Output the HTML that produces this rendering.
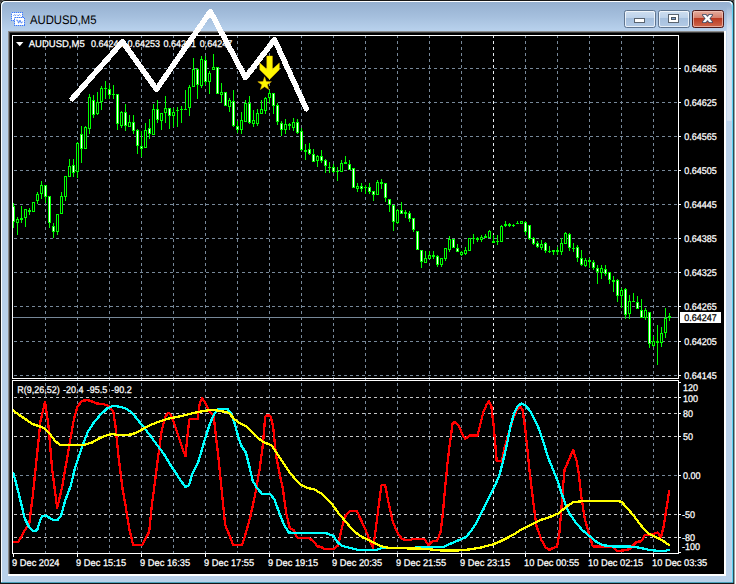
<!DOCTYPE html>
<html lang="en"><head><meta charset="utf-8"><title>AUDUSD,M5</title>
<style>
html,body{margin:0;padding:0;background:#fff;}
body{width:736px;height:584px;overflow:hidden;}
svg{display:block;}
text{font-family:"Liberation Sans",Arial,sans-serif;}
.ax{font-size:9.7px;text-rendering:geometricPrecision;fill:#fff;stroke:#fff;stroke-width:0.25px;}
.g{stroke:#778899;stroke-width:1;stroke-dasharray:3 3;fill:none;}
.gb{stroke:#e8ecf0;stroke-width:1;stroke-dasharray:3 3;fill:none;}
.gs{stroke:#c6c6c6;stroke-width:1;stroke-dasharray:3 3;fill:none;}
.w{fill:#fff;}
.ln{fill:none;stroke-width:2.3;stroke-linejoin:round;stroke-linecap:round;shape-rendering:crispEdges;}
</style></head><body>
<svg width="736" height="584" viewBox="0 0 736 584">
<defs>
<linearGradient id="tb" x1="0" y1="0" x2="0" y2="1"><stop offset="0" stop-color="#95b0d0"/><stop offset="0.5" stop-color="#a5bfdd"/><stop offset="1" stop-color="#b9d2ed"/></linearGradient>
<linearGradient id="bt" x1="0" y1="0" x2="0" y2="1"><stop offset="0" stop-color="#cfdff0"/><stop offset="0.43" stop-color="#bdd2ea"/><stop offset="0.47" stop-color="#a6c0de"/><stop offset="1" stop-color="#b4cbe6"/></linearGradient>
<linearGradient id="cl" x1="0" y1="0" x2="0" y2="1"><stop offset="0" stop-color="#e6b0a2"/><stop offset="0.43" stop-color="#d6816e"/><stop offset="0.47" stop-color="#bb3b22"/><stop offset="1" stop-color="#cf6a4f"/></linearGradient>
<linearGradient id="rf" x1="0" y1="0" x2="0" y2="1"><stop offset="0" stop-color="#d5e2f1" stop-opacity="0"/><stop offset="0.22" stop-color="#d5e2f1" stop-opacity="1"/><stop offset="1" stop-color="#d5e2f1" stop-opacity="1"/></linearGradient>
</defs>
<g shape-rendering="crispEdges">
<rect x="0" y="0" width="736" height="584" fill="#ffffff"/>
</g>
<path d="M0 584 V5 Q0 0 5 0 H729.4 Q734.4 0 734.4 5 V584 Z" fill="#161616"/>
<path d="M0 0 H5 Q0 0 0 5 Z" fill="#3a3a3a"/>
<path d="M734.4 0 H729.4 Q734.4 0 734.4 5 Z" fill="#3a3a3a"/>
<path d="M1 582.7 V6 Q1 1 6 1 H728.3 Q733.3 1 733.3 6 V582.7 Z" fill="#5fd2f4"/>
<path d="M1 582 V6 Q1 1 6 1 H728 Q731 1 732.4 3 L731.9 8 V582 Z" fill="#fdfeff"/>
<path d="M2 581.9 V7 Q2 2 7 2 H727 Q731.9 2 731.9 7 V581.9 Z" fill="#b9d1ea"/>
<path d="M2 31 V7 Q2 2 7 2 H727 Q731.9 2 731.9 7 V31 Z" fill="url(#tb)"/>
<rect x="726.8" y="6" width="4.8" height="114.8" fill="url(#rf)"/>
<g shape-rendering="crispEdges">
<rect x="8" y="31" width="718" height="545" fill="#ffffff"/>
<rect x="8" y="31" width="716" height="543" fill="#8a8a8a"/>
<rect x="9" y="32" width="715" height="542" fill="#3c3c3c"/>
<rect x="10" y="33" width="714" height="541" fill="#000000"/>
</g>
<g shape-rendering="crispEdges">
<path class="g" d="M45.5 35V553" />
<path class="g" d="M77.5 35V553" />
<path class="g" d="M109.5 35V553" />
<path class="g" d="M141.5 35V553" />
<path class="g" d="M173.5 35V553" />
<path class="g" d="M205.5 35V553" />
<path class="g" d="M237.5 35V553" />
<path class="g" d="M269.5 35V553" />
<path class="g" d="M301.5 35V553" />
<path class="g" d="M333.5 35V553" />
<path class="g" d="M365.5 35V553" />
<path class="g" d="M397.5 35V553" />
<path class="g" d="M429.5 35V553" />
<path class="g" d="M461.5 35V553" />
<path class="gb" d="M493.5 35V553" />
<path class="g" d="M525.5 35V553" />
<path class="g" d="M557.5 35V553" />
<path class="g" d="M589.5 35V553" />
<path class="g" d="M621.5 35V553" />
<path class="g" d="M653.5 35V553" />
<path class="g" d="M14 68.5H678" /><path class="g" d="M14 102.5H678" /><path class="g" d="M14 136.5H678" /><path class="g" d="M14 170.5H678" /><path class="g" d="M14 204.5H678" /><path class="g" d="M14 238.5H678" /><path class="g" d="M14 272.5H678" /><path class="g" d="M14 306.5H678" /><path class="g" d="M14 341.5H678" /><path class="g" d="M14 375.5H678" /><path class="gs" d="M14 397.5H678" /><path class="gs" d="M14 413.5H678" /><path class="gs" d="M14 436.5H678" /><path class="g" d="M14 475.5H678" /><path class="gs" d="M14 514.5H678" /><path class="gs" d="M14 537.5H678" />
<rect x="13" y="317" width="665" height="1" fill="#778899"/>
</g>
<g shape-rendering="crispEdges">
<rect x="13" y="203" width="1" height="25" fill="#00ff00"/><rect x="12" y="206" width="3" height="16" fill="#00ff00"/><rect x="13" y="207" width="1" height="14" fill="#ffffff"/>
<rect x="17" y="217" width="1" height="18" fill="#00ff00"/><rect x="16" y="219" width="3" height="4" fill="#00ff00"/><rect x="17" y="220" width="1" height="2" fill="#000000"/>
<rect x="21" y="206" width="1" height="17" fill="#00ff00"/><rect x="20" y="218" width="3" height="2" fill="#00ff00"/>
<rect x="25" y="209" width="1" height="18" fill="#00ff00"/><rect x="24" y="209" width="3" height="9" fill="#00ff00"/><rect x="25" y="210" width="1" height="7" fill="#000000"/>
<rect x="29" y="208" width="1" height="7" fill="#00ff00"/><rect x="28" y="210" width="3" height="2" fill="#00ff00"/>
<rect x="33" y="202" width="1" height="10" fill="#00ff00"/><rect x="32" y="202" width="3" height="10" fill="#00ff00"/><rect x="33" y="203" width="1" height="8" fill="#000000"/>
<rect x="37" y="192" width="1" height="12" fill="#00ff00"/><rect x="36" y="194" width="3" height="7" fill="#00ff00"/><rect x="37" y="195" width="1" height="5" fill="#000000"/>
<rect x="41" y="181" width="1" height="18" fill="#00ff00"/><rect x="40" y="185" width="3" height="9" fill="#00ff00"/><rect x="41" y="186" width="1" height="7" fill="#000000"/>
<rect x="45" y="185" width="1" height="18" fill="#00ff00"/><rect x="44" y="185" width="3" height="12" fill="#00ff00"/><rect x="45" y="186" width="1" height="10" fill="#ffffff"/>
<rect x="49" y="196" width="1" height="32" fill="#00ff00"/><rect x="48" y="196" width="3" height="27" fill="#00ff00"/><rect x="49" y="197" width="1" height="25" fill="#ffffff"/>
<rect x="53" y="223" width="1" height="15" fill="#00ff00"/><rect x="52" y="226" width="3" height="6" fill="#00ff00"/><rect x="53" y="227" width="1" height="4" fill="#ffffff"/>
<rect x="57" y="214" width="1" height="21" fill="#00ff00"/><rect x="56" y="214" width="3" height="18" fill="#00ff00"/><rect x="57" y="215" width="1" height="16" fill="#000000"/>
<rect x="61" y="192" width="1" height="22" fill="#00ff00"/><rect x="60" y="196" width="3" height="18" fill="#00ff00"/><rect x="61" y="197" width="1" height="16" fill="#000000"/>
<rect x="65" y="176" width="1" height="25" fill="#00ff00"/><rect x="64" y="176" width="3" height="21" fill="#00ff00"/><rect x="65" y="177" width="1" height="19" fill="#000000"/>
<rect x="69" y="159" width="1" height="18" fill="#00ff00"/><rect x="68" y="166" width="3" height="11" fill="#00ff00"/><rect x="69" y="167" width="1" height="9" fill="#000000"/>
<rect x="73" y="159" width="1" height="18" fill="#00ff00"/><rect x="72" y="165" width="3" height="8" fill="#00ff00"/><rect x="73" y="166" width="1" height="6" fill="#ffffff"/>
<rect x="77" y="142" width="1" height="36" fill="#00ff00"/><rect x="76" y="143" width="3" height="29" fill="#00ff00"/><rect x="77" y="144" width="1" height="27" fill="#000000"/>
<rect x="81" y="126" width="1" height="37" fill="#00ff00"/><rect x="80" y="134" width="3" height="15" fill="#00ff00"/><rect x="81" y="135" width="1" height="13" fill="#ffffff"/>
<rect x="85" y="126" width="1" height="23" fill="#00ff00"/><rect x="84" y="127" width="3" height="22" fill="#00ff00"/><rect x="85" y="128" width="1" height="20" fill="#000000"/>
<rect x="89" y="94" width="1" height="40" fill="#00ff00"/><rect x="88" y="97" width="3" height="32" fill="#00ff00"/><rect x="89" y="98" width="1" height="30" fill="#000000"/>
<rect x="93" y="95" width="1" height="23" fill="#00ff00"/><rect x="92" y="100" width="3" height="15" fill="#00ff00"/><rect x="93" y="101" width="1" height="13" fill="#ffffff"/>
<rect x="97" y="92" width="1" height="23" fill="#00ff00"/><rect x="96" y="102" width="3" height="12" fill="#00ff00"/><rect x="97" y="103" width="1" height="10" fill="#000000"/>
<rect x="101" y="86" width="1" height="24" fill="#00ff00"/><rect x="100" y="88" width="3" height="14" fill="#00ff00"/><rect x="101" y="89" width="1" height="12" fill="#000000"/>
<rect x="105" y="81" width="1" height="18" fill="#00ff00"/><rect x="104" y="88" width="3" height="1" fill="#00ff00"/>
<rect x="109" y="85" width="1" height="14" fill="#00ff00"/><rect x="108" y="89" width="3" height="6" fill="#00ff00"/><rect x="109" y="90" width="1" height="4" fill="#ffffff"/>
<rect x="113" y="85" width="1" height="14" fill="#00ff00"/><rect x="112" y="94" width="3" height="1" fill="#00ff00"/>
<rect x="117" y="94" width="1" height="36" fill="#00ff00"/><rect x="116" y="94" width="3" height="30" fill="#00ff00"/><rect x="117" y="95" width="1" height="28" fill="#ffffff"/>
<rect x="121" y="111" width="1" height="17" fill="#00ff00"/><rect x="120" y="112" width="3" height="14" fill="#00ff00"/><rect x="121" y="113" width="1" height="12" fill="#000000"/>
<rect x="125" y="104" width="1" height="27" fill="#00ff00"/><rect x="124" y="112" width="3" height="14" fill="#00ff00"/><rect x="125" y="113" width="1" height="12" fill="#ffffff"/>
<rect x="129" y="115" width="1" height="12" fill="#00ff00"/><rect x="128" y="122" width="3" height="5" fill="#00ff00"/><rect x="129" y="123" width="1" height="3" fill="#000000"/>
<rect x="133" y="115" width="1" height="19" fill="#00ff00"/><rect x="132" y="122" width="3" height="9" fill="#00ff00"/><rect x="133" y="123" width="1" height="7" fill="#ffffff"/>
<rect x="137" y="129" width="1" height="25" fill="#00ff00"/><rect x="136" y="130" width="3" height="16" fill="#00ff00"/><rect x="137" y="131" width="1" height="14" fill="#ffffff"/>
<rect x="141" y="131" width="1" height="26" fill="#00ff00"/><rect x="140" y="146" width="3" height="3" fill="#00ff00"/><rect x="141" y="147" width="1" height="1" fill="#ffffff"/>
<rect x="145" y="123" width="1" height="25" fill="#00ff00"/><rect x="144" y="130" width="3" height="18" fill="#00ff00"/><rect x="145" y="131" width="1" height="16" fill="#000000"/>
<rect x="149" y="119" width="1" height="20" fill="#00ff00"/><rect x="148" y="128" width="3" height="6" fill="#00ff00"/><rect x="149" y="129" width="1" height="4" fill="#ffffff"/>
<rect x="153" y="104" width="1" height="31" fill="#00ff00"/><rect x="152" y="109" width="3" height="26" fill="#00ff00"/><rect x="153" y="110" width="1" height="24" fill="#000000"/>
<rect x="157" y="100" width="1" height="23" fill="#00ff00"/><rect x="156" y="109" width="3" height="11" fill="#00ff00"/><rect x="157" y="110" width="1" height="9" fill="#ffffff"/>
<rect x="161" y="113" width="1" height="17" fill="#00ff00"/><rect x="160" y="113" width="3" height="8" fill="#00ff00"/><rect x="161" y="114" width="1" height="6" fill="#000000"/>
<rect x="165" y="96" width="1" height="27" fill="#00ff00"/><rect x="164" y="108" width="3" height="5" fill="#00ff00"/><rect x="165" y="109" width="1" height="3" fill="#000000"/>
<rect x="169" y="108" width="1" height="21" fill="#00ff00"/><rect x="168" y="108" width="3" height="8" fill="#00ff00"/><rect x="169" y="109" width="1" height="6" fill="#ffffff"/>
<rect x="173" y="108" width="1" height="19" fill="#00ff00"/><rect x="172" y="112" width="3" height="4" fill="#00ff00"/><rect x="173" y="113" width="1" height="2" fill="#000000"/>
<rect x="177" y="107" width="1" height="20" fill="#00ff00"/><rect x="176" y="110" width="3" height="1" fill="#00ff00"/>
<rect x="181" y="106" width="1" height="17" fill="#00ff00"/><rect x="180" y="109" width="3" height="1" fill="#00ff00"/>
<rect x="185" y="90" width="1" height="20" fill="#00ff00"/><rect x="184" y="109" width="3" height="1" fill="#00ff00"/>
<rect x="189" y="85" width="1" height="31" fill="#00ff00"/><rect x="188" y="87" width="3" height="21" fill="#00ff00"/><rect x="189" y="88" width="1" height="19" fill="#000000"/>
<rect x="193" y="58" width="1" height="29" fill="#00ff00"/><rect x="192" y="69" width="3" height="18" fill="#00ff00"/><rect x="193" y="70" width="1" height="16" fill="#000000"/>
<rect x="197" y="68" width="1" height="31" fill="#00ff00"/><rect x="196" y="69" width="3" height="16" fill="#00ff00"/><rect x="197" y="70" width="1" height="14" fill="#ffffff"/>
<rect x="201" y="56" width="1" height="32" fill="#00ff00"/><rect x="200" y="59" width="3" height="27" fill="#00ff00"/><rect x="201" y="60" width="1" height="25" fill="#000000"/>
<rect x="205" y="56" width="1" height="29" fill="#00ff00"/><rect x="204" y="60" width="3" height="22" fill="#00ff00"/><rect x="205" y="61" width="1" height="20" fill="#ffffff"/>
<rect x="209" y="71" width="1" height="23" fill="#00ff00"/><rect x="208" y="73" width="3" height="9" fill="#00ff00"/><rect x="209" y="74" width="1" height="7" fill="#000000"/>
<rect x="213" y="54" width="1" height="16" fill="#00ff00"/><rect x="212" y="67" width="3" height="3" fill="#00ff00"/><rect x="213" y="68" width="1" height="1" fill="#000000"/>
<rect x="217" y="67" width="1" height="27" fill="#00ff00"/><rect x="216" y="67" width="3" height="27" fill="#00ff00"/><rect x="217" y="68" width="1" height="25" fill="#ffffff"/>
<rect x="221" y="83" width="1" height="20" fill="#00ff00"/><rect x="220" y="92" width="3" height="3" fill="#00ff00"/><rect x="221" y="93" width="1" height="1" fill="#000000"/>
<rect x="225" y="92" width="1" height="14" fill="#00ff00"/><rect x="224" y="92" width="3" height="14" fill="#00ff00"/><rect x="225" y="93" width="1" height="12" fill="#ffffff"/>
<rect x="229" y="98" width="1" height="14" fill="#00ff00"/><rect x="228" y="100" width="3" height="7" fill="#00ff00"/><rect x="229" y="101" width="1" height="5" fill="#000000"/>
<rect x="233" y="90" width="1" height="37" fill="#00ff00"/><rect x="232" y="101" width="3" height="25" fill="#00ff00"/><rect x="233" y="102" width="1" height="23" fill="#ffffff"/>
<rect x="237" y="121" width="1" height="12" fill="#00ff00"/><rect x="236" y="126" width="3" height="4" fill="#00ff00"/><rect x="237" y="127" width="1" height="2" fill="#ffffff"/>
<rect x="241" y="112" width="1" height="22" fill="#00ff00"/><rect x="240" y="120" width="3" height="10" fill="#00ff00"/><rect x="241" y="121" width="1" height="8" fill="#000000"/>
<rect x="245" y="100" width="1" height="22" fill="#00ff00"/><rect x="244" y="103" width="3" height="19" fill="#00ff00"/><rect x="245" y="104" width="1" height="17" fill="#000000"/>
<rect x="249" y="96" width="1" height="28" fill="#00ff00"/><rect x="248" y="103" width="3" height="20" fill="#00ff00"/><rect x="249" y="104" width="1" height="18" fill="#ffffff"/>
<rect x="253" y="110" width="1" height="17" fill="#00ff00"/><rect x="252" y="120" width="3" height="4" fill="#00ff00"/><rect x="253" y="121" width="1" height="2" fill="#000000"/>
<rect x="257" y="109" width="1" height="17" fill="#00ff00"/><rect x="256" y="113" width="3" height="11" fill="#00ff00"/><rect x="257" y="114" width="1" height="9" fill="#000000"/>
<rect x="261" y="100" width="1" height="14" fill="#00ff00"/><rect x="260" y="109" width="3" height="5" fill="#00ff00"/><rect x="261" y="110" width="1" height="3" fill="#000000"/>
<rect x="265" y="97" width="1" height="17" fill="#00ff00"/><rect x="264" y="98" width="3" height="13" fill="#00ff00"/><rect x="265" y="99" width="1" height="11" fill="#000000"/>
<rect x="269" y="90" width="1" height="13" fill="#00ff00"/><rect x="268" y="93" width="3" height="5" fill="#00ff00"/><rect x="269" y="94" width="1" height="3" fill="#000000"/>
<rect x="273" y="93" width="1" height="21" fill="#00ff00"/><rect x="272" y="93" width="3" height="13" fill="#00ff00"/><rect x="273" y="94" width="1" height="11" fill="#ffffff"/>
<rect x="277" y="103" width="1" height="22" fill="#00ff00"/><rect x="276" y="105" width="3" height="17" fill="#00ff00"/><rect x="277" y="106" width="1" height="15" fill="#ffffff"/>
<rect x="281" y="121" width="1" height="15" fill="#00ff00"/><rect x="280" y="123" width="3" height="7" fill="#00ff00"/><rect x="281" y="124" width="1" height="5" fill="#ffffff"/>
<rect x="285" y="119" width="1" height="15" fill="#00ff00"/><rect x="284" y="124" width="3" height="6" fill="#00ff00"/><rect x="285" y="125" width="1" height="4" fill="#000000"/>
<rect x="289" y="123" width="1" height="7" fill="#00ff00"/><rect x="288" y="124" width="3" height="2" fill="#00ff00"/>
<rect x="293" y="118" width="1" height="13" fill="#00ff00"/><rect x="292" y="122" width="3" height="6" fill="#00ff00"/><rect x="293" y="123" width="1" height="4" fill="#000000"/>
<rect x="297" y="119" width="1" height="15" fill="#00ff00"/><rect x="296" y="122" width="3" height="11" fill="#00ff00"/><rect x="297" y="123" width="1" height="9" fill="#ffffff"/>
<rect x="301" y="128" width="1" height="23" fill="#00ff00"/><rect x="300" y="131" width="3" height="19" fill="#00ff00"/><rect x="301" y="132" width="1" height="17" fill="#ffffff"/>
<rect x="305" y="144" width="1" height="16" fill="#00ff00"/><rect x="304" y="150" width="3" height="2" fill="#00ff00"/>
<rect x="309" y="143" width="1" height="12" fill="#00ff00"/><rect x="308" y="149" width="3" height="5" fill="#00ff00"/><rect x="309" y="150" width="1" height="3" fill="#ffffff"/>
<rect x="313" y="149" width="1" height="13" fill="#00ff00"/><rect x="312" y="154" width="3" height="8" fill="#00ff00"/><rect x="313" y="155" width="1" height="6" fill="#ffffff"/>
<rect x="317" y="155" width="1" height="12" fill="#00ff00"/><rect x="316" y="156" width="3" height="5" fill="#00ff00"/><rect x="317" y="157" width="1" height="3" fill="#000000"/>
<rect x="321" y="150" width="1" height="13" fill="#00ff00"/><rect x="320" y="156" width="3" height="5" fill="#00ff00"/><rect x="321" y="157" width="1" height="3" fill="#ffffff"/>
<rect x="325" y="159" width="1" height="14" fill="#00ff00"/><rect x="324" y="160" width="3" height="6" fill="#00ff00"/><rect x="325" y="161" width="1" height="4" fill="#ffffff"/>
<rect x="329" y="162" width="1" height="11" fill="#00ff00"/><rect x="328" y="167" width="3" height="1" fill="#00ff00"/>
<rect x="333" y="164" width="1" height="9" fill="#00ff00"/><rect x="332" y="167" width="3" height="5" fill="#00ff00"/><rect x="333" y="168" width="1" height="3" fill="#ffffff"/>
<rect x="337" y="167" width="1" height="14" fill="#00ff00"/><rect x="336" y="171" width="3" height="1" fill="#00ff00"/>
<rect x="341" y="160" width="1" height="12" fill="#00ff00"/><rect x="340" y="163" width="3" height="9" fill="#00ff00"/><rect x="341" y="164" width="1" height="7" fill="#000000"/>
<rect x="345" y="156" width="1" height="8" fill="#00ff00"/><rect x="344" y="162" width="3" height="2" fill="#00ff00"/>
<rect x="349" y="160" width="1" height="10" fill="#00ff00"/><rect x="348" y="164" width="3" height="6" fill="#00ff00"/><rect x="349" y="165" width="1" height="4" fill="#ffffff"/>
<rect x="353" y="168" width="1" height="20" fill="#00ff00"/><rect x="352" y="168" width="3" height="20" fill="#00ff00"/><rect x="353" y="169" width="1" height="18" fill="#ffffff"/>
<rect x="357" y="183" width="1" height="9" fill="#00ff00"/><rect x="356" y="186" width="3" height="3" fill="#00ff00"/><rect x="357" y="187" width="1" height="1" fill="#000000"/>
<rect x="361" y="183" width="1" height="9" fill="#00ff00"/><rect x="360" y="186" width="3" height="3" fill="#00ff00"/><rect x="361" y="187" width="1" height="1" fill="#ffffff"/>
<rect x="365" y="185" width="1" height="9" fill="#00ff00"/><rect x="364" y="187" width="3" height="1" fill="#00ff00"/>
<rect x="369" y="183" width="1" height="11" fill="#00ff00"/><rect x="368" y="187" width="3" height="5" fill="#00ff00"/><rect x="369" y="188" width="1" height="3" fill="#ffffff"/>
<rect x="373" y="191" width="1" height="10" fill="#00ff00"/><rect x="372" y="191" width="3" height="4" fill="#00ff00"/><rect x="373" y="192" width="1" height="2" fill="#ffffff"/>
<rect x="377" y="180" width="1" height="15" fill="#00ff00"/><rect x="376" y="182" width="3" height="13" fill="#00ff00"/><rect x="377" y="183" width="1" height="11" fill="#000000"/>
<rect x="381" y="179" width="1" height="10" fill="#00ff00"/><rect x="380" y="182" width="3" height="2" fill="#00ff00"/>
<rect x="385" y="183" width="1" height="19" fill="#00ff00"/><rect x="384" y="183" width="3" height="15" fill="#00ff00"/><rect x="385" y="184" width="1" height="13" fill="#ffffff"/>
<rect x="389" y="199" width="1" height="13" fill="#00ff00"/><rect x="388" y="199" width="3" height="6" fill="#00ff00"/><rect x="389" y="200" width="1" height="4" fill="#ffffff"/>
<rect x="393" y="205" width="1" height="26" fill="#00ff00"/><rect x="392" y="205" width="3" height="17" fill="#00ff00"/><rect x="393" y="206" width="1" height="15" fill="#ffffff"/>
<rect x="397" y="209" width="1" height="15" fill="#00ff00"/><rect x="396" y="210" width="3" height="13" fill="#00ff00"/><rect x="397" y="211" width="1" height="11" fill="#000000"/>
<rect x="401" y="202" width="1" height="12" fill="#00ff00"/><rect x="400" y="210" width="3" height="4" fill="#00ff00"/><rect x="401" y="211" width="1" height="2" fill="#ffffff"/>
<rect x="405" y="210" width="1" height="8" fill="#00ff00"/><rect x="404" y="212" width="3" height="2" fill="#00ff00"/>
<rect x="409" y="211" width="1" height="11" fill="#00ff00"/><rect x="408" y="213" width="3" height="6" fill="#00ff00"/><rect x="409" y="214" width="1" height="4" fill="#ffffff"/>
<rect x="413" y="218" width="1" height="14" fill="#00ff00"/><rect x="412" y="218" width="3" height="12" fill="#00ff00"/><rect x="413" y="219" width="1" height="10" fill="#ffffff"/>
<rect x="417" y="231" width="1" height="19" fill="#00ff00"/><rect x="416" y="231" width="3" height="19" fill="#00ff00"/><rect x="417" y="232" width="1" height="17" fill="#ffffff"/>
<rect x="421" y="250" width="1" height="18" fill="#00ff00"/><rect x="420" y="250" width="3" height="12" fill="#00ff00"/><rect x="421" y="251" width="1" height="10" fill="#ffffff"/>
<rect x="425" y="251" width="1" height="12" fill="#00ff00"/><rect x="424" y="258" width="3" height="5" fill="#00ff00"/><rect x="425" y="259" width="1" height="3" fill="#000000"/>
<rect x="429" y="251" width="1" height="8" fill="#00ff00"/><rect x="428" y="255" width="3" height="4" fill="#00ff00"/><rect x="429" y="256" width="1" height="2" fill="#000000"/>
<rect x="433" y="251" width="1" height="8" fill="#00ff00"/><rect x="432" y="255" width="3" height="2" fill="#00ff00"/>
<rect x="437" y="255" width="1" height="12" fill="#00ff00"/><rect x="436" y="256" width="3" height="9" fill="#00ff00"/><rect x="437" y="257" width="1" height="7" fill="#ffffff"/>
<rect x="441" y="258" width="1" height="9" fill="#00ff00"/><rect x="440" y="258" width="3" height="7" fill="#00ff00"/><rect x="441" y="259" width="1" height="5" fill="#000000"/>
<rect x="445" y="248" width="1" height="13" fill="#00ff00"/><rect x="444" y="248" width="3" height="11" fill="#00ff00"/><rect x="445" y="249" width="1" height="9" fill="#000000"/>
<rect x="449" y="236" width="1" height="16" fill="#00ff00"/><rect x="448" y="239" width="3" height="11" fill="#00ff00"/><rect x="449" y="240" width="1" height="9" fill="#000000"/>
<rect x="453" y="239" width="1" height="9" fill="#00ff00"/><rect x="452" y="239" width="3" height="9" fill="#00ff00"/><rect x="453" y="240" width="1" height="7" fill="#ffffff"/>
<rect x="457" y="244" width="1" height="8" fill="#00ff00"/><rect x="456" y="248" width="3" height="4" fill="#00ff00"/><rect x="457" y="249" width="1" height="2" fill="#ffffff"/>
<rect x="461" y="251" width="1" height="5" fill="#00ff00"/><rect x="460" y="252" width="3" height="3" fill="#00ff00"/><rect x="461" y="253" width="1" height="1" fill="#000000"/>
<rect x="465" y="247" width="1" height="8" fill="#00ff00"/><rect x="464" y="250" width="3" height="4" fill="#00ff00"/><rect x="465" y="251" width="1" height="2" fill="#000000"/>
<rect x="469" y="238" width="1" height="13" fill="#00ff00"/><rect x="468" y="238" width="3" height="13" fill="#00ff00"/><rect x="469" y="239" width="1" height="11" fill="#000000"/>
<rect x="473" y="234" width="1" height="10" fill="#00ff00"/><rect x="472" y="238" width="3" height="1" fill="#00ff00"/>
<rect x="477" y="237" width="1" height="5" fill="#00ff00"/><rect x="476" y="238" width="3" height="2" fill="#00ff00"/>
<rect x="481" y="235" width="1" height="7" fill="#00ff00"/><rect x="480" y="237" width="3" height="3" fill="#00ff00"/><rect x="481" y="238" width="1" height="1" fill="#000000"/>
<rect x="485" y="234" width="1" height="4" fill="#00ff00"/><rect x="484" y="236" width="3" height="2" fill="#00ff00"/>
<rect x="489" y="230" width="1" height="8" fill="#00ff00"/><rect x="488" y="231" width="3" height="7" fill="#00ff00"/><rect x="489" y="232" width="1" height="5" fill="#000000"/>
<rect x="493" y="235" width="1" height="8" fill="#00ff00"/><rect x="492" y="241" width="3" height="2" fill="#00ff00"/>
<rect x="497" y="235" width="1" height="10" fill="#00ff00"/><rect x="496" y="241" width="3" height="1" fill="#00ff00"/>
<rect x="501" y="225" width="1" height="17" fill="#00ff00"/><rect x="500" y="226" width="3" height="16" fill="#00ff00"/><rect x="501" y="227" width="1" height="14" fill="#000000"/>
<rect x="505" y="221" width="1" height="6" fill="#00ff00"/><rect x="504" y="224" width="3" height="2" fill="#00ff00"/>
<rect x="509" y="223" width="1" height="4" fill="#00ff00"/><rect x="508" y="224" width="3" height="2" fill="#00ff00"/>
<rect x="513" y="224" width="1" height="3" fill="#00ff00"/><rect x="512" y="225" width="3" height="1" fill="#00ff00"/>
<rect x="517" y="221" width="1" height="3" fill="#00ff00"/><rect x="516" y="223" width="3" height="1" fill="#00ff00"/>
<rect x="521" y="221" width="1" height="3" fill="#00ff00"/><rect x="520" y="221" width="3" height="3" fill="#00ff00"/><rect x="521" y="222" width="1" height="1" fill="#000000"/>
<rect x="525" y="221" width="1" height="14" fill="#00ff00"/><rect x="524" y="222" width="3" height="10" fill="#00ff00"/><rect x="525" y="223" width="1" height="8" fill="#ffffff"/>
<rect x="529" y="225" width="1" height="15" fill="#00ff00"/><rect x="528" y="225" width="3" height="14" fill="#00ff00"/><rect x="529" y="226" width="1" height="12" fill="#ffffff"/>
<rect x="533" y="237" width="1" height="8" fill="#00ff00"/><rect x="532" y="238" width="3" height="6" fill="#00ff00"/><rect x="533" y="239" width="1" height="4" fill="#ffffff"/>
<rect x="537" y="241" width="1" height="7" fill="#00ff00"/><rect x="536" y="243" width="3" height="4" fill="#00ff00"/><rect x="537" y="244" width="1" height="2" fill="#ffffff"/>
<rect x="541" y="240" width="1" height="10" fill="#00ff00"/><rect x="540" y="244" width="3" height="4" fill="#00ff00"/><rect x="541" y="245" width="1" height="2" fill="#000000"/>
<rect x="545" y="242" width="1" height="11" fill="#00ff00"/><rect x="544" y="243" width="3" height="8" fill="#00ff00"/><rect x="545" y="244" width="1" height="6" fill="#ffffff"/>
<rect x="549" y="246" width="1" height="7" fill="#00ff00"/><rect x="548" y="251" width="3" height="1" fill="#00ff00"/>
<rect x="553" y="250" width="1" height="5" fill="#00ff00"/><rect x="552" y="250" width="3" height="2" fill="#00ff00"/>
<rect x="557" y="247" width="1" height="8" fill="#00ff00"/><rect x="556" y="250" width="3" height="2" fill="#00ff00"/>
<rect x="561" y="238" width="1" height="17" fill="#00ff00"/><rect x="560" y="243" width="3" height="9" fill="#00ff00"/><rect x="561" y="244" width="1" height="7" fill="#000000"/>
<rect x="565" y="232" width="1" height="12" fill="#00ff00"/><rect x="564" y="233" width="3" height="11" fill="#00ff00"/><rect x="565" y="234" width="1" height="9" fill="#000000"/>
<rect x="569" y="233" width="1" height="18" fill="#00ff00"/><rect x="568" y="234" width="3" height="14" fill="#00ff00"/><rect x="569" y="235" width="1" height="12" fill="#ffffff"/>
<rect x="573" y="243" width="1" height="9" fill="#00ff00"/><rect x="572" y="248" width="3" height="1" fill="#00ff00"/>
<rect x="577" y="245" width="1" height="17" fill="#00ff00"/><rect x="576" y="247" width="3" height="11" fill="#00ff00"/><rect x="577" y="248" width="1" height="9" fill="#ffffff"/>
<rect x="581" y="250" width="1" height="16" fill="#00ff00"/><rect x="580" y="258" width="3" height="7" fill="#00ff00"/><rect x="581" y="259" width="1" height="5" fill="#ffffff"/>
<rect x="585" y="258" width="1" height="9" fill="#00ff00"/><rect x="584" y="260" width="3" height="6" fill="#00ff00"/><rect x="585" y="261" width="1" height="4" fill="#000000"/>
<rect x="589" y="258" width="1" height="10" fill="#00ff00"/><rect x="588" y="260" width="3" height="2" fill="#00ff00"/>
<rect x="593" y="260" width="1" height="10" fill="#00ff00"/><rect x="592" y="262" width="3" height="6" fill="#00ff00"/><rect x="593" y="263" width="1" height="4" fill="#ffffff"/>
<rect x="597" y="265" width="1" height="19" fill="#00ff00"/><rect x="596" y="268" width="3" height="4" fill="#00ff00"/><rect x="597" y="269" width="1" height="2" fill="#ffffff"/>
<rect x="601" y="265" width="1" height="14" fill="#00ff00"/><rect x="600" y="268" width="3" height="5" fill="#00ff00"/><rect x="601" y="269" width="1" height="3" fill="#000000"/>
<rect x="605" y="265" width="1" height="11" fill="#00ff00"/><rect x="604" y="269" width="3" height="5" fill="#00ff00"/><rect x="605" y="270" width="1" height="3" fill="#ffffff"/>
<rect x="609" y="272" width="1" height="12" fill="#00ff00"/><rect x="608" y="272" width="3" height="8" fill="#00ff00"/><rect x="609" y="273" width="1" height="6" fill="#ffffff"/>
<rect x="613" y="276" width="1" height="16" fill="#00ff00"/><rect x="612" y="280" width="3" height="2" fill="#00ff00"/>
<rect x="617" y="279" width="1" height="23" fill="#00ff00"/><rect x="616" y="280" width="3" height="16" fill="#00ff00"/><rect x="617" y="281" width="1" height="14" fill="#ffffff"/>
<rect x="621" y="288" width="1" height="20" fill="#00ff00"/><rect x="620" y="290" width="3" height="6" fill="#00ff00"/><rect x="621" y="291" width="1" height="4" fill="#000000"/>
<rect x="625" y="288" width="1" height="31" fill="#00ff00"/><rect x="624" y="289" width="3" height="26" fill="#00ff00"/><rect x="625" y="290" width="1" height="24" fill="#ffffff"/>
<rect x="629" y="295" width="1" height="24" fill="#00ff00"/><rect x="628" y="301" width="3" height="13" fill="#00ff00"/><rect x="629" y="302" width="1" height="11" fill="#000000"/>
<rect x="633" y="293" width="1" height="9" fill="#00ff00"/><rect x="632" y="301" width="3" height="1" fill="#00ff00"/>
<rect x="637" y="296" width="1" height="13" fill="#00ff00"/><rect x="636" y="302" width="3" height="7" fill="#00ff00"/><rect x="637" y="303" width="1" height="5" fill="#ffffff"/>
<rect x="641" y="299" width="1" height="19" fill="#00ff00"/><rect x="640" y="310" width="3" height="8" fill="#00ff00"/><rect x="641" y="311" width="1" height="6" fill="#ffffff"/>
<rect x="645" y="308" width="1" height="12" fill="#00ff00"/><rect x="644" y="310" width="3" height="8" fill="#00ff00"/><rect x="645" y="311" width="1" height="6" fill="#000000"/>
<rect x="649" y="312" width="1" height="36" fill="#00ff00"/><rect x="648" y="312" width="3" height="32" fill="#00ff00"/><rect x="649" y="313" width="1" height="30" fill="#ffffff"/>
<rect x="653" y="336" width="1" height="11" fill="#00ff00"/><rect x="652" y="341" width="3" height="5" fill="#00ff00"/><rect x="653" y="342" width="1" height="3" fill="#000000"/>
<rect x="657" y="325" width="1" height="40" fill="#00ff00"/><rect x="656" y="341" width="3" height="2" fill="#00ff00"/>
<rect x="661" y="327" width="1" height="20" fill="#00ff00"/><rect x="660" y="333" width="3" height="10" fill="#00ff00"/><rect x="661" y="334" width="1" height="8" fill="#000000"/>
<rect x="665" y="308" width="1" height="30" fill="#00ff00"/><rect x="664" y="318" width="3" height="15" fill="#00ff00"/><rect x="665" y="319" width="1" height="13" fill="#000000"/>
<rect x="669" y="313" width="1" height="8" fill="#00ff00"/><rect x="668" y="316" width="3" height="2" fill="#00ff00"/>
</g>
<polyline class="ln" stroke="#ff0000" points="13.3,542.1 18.6,541.6 23.9,531.8 29.2,523.9 32.7,496.5 36.5,460.0 40.4,421.6 45.0,402.0 48.5,426.0 52.0,468.0 57.2,508.0 62.3,486.4 68.6,449.4 73.9,419.3 77.4,406.6 82.0,400.8 87.8,400.1 93.6,402.0 97.0,403.6 102.8,403.8 108.6,405.9 113.2,411.2 115.5,426.3 118.5,456.3 122.5,488.7 125.5,505.3 129.5,530.0 133.2,545.1 142.1,545.1 149.2,531.8 151.8,505.3 154.7,484.0 158.2,456.3 161.6,430.9 165.1,417.0 168.1,412.8 170.9,414.7 174.3,423.9 179.0,437.8 182.4,448.2 185.5,456.3 187.5,435.5 189.4,419.3 197.5,419.3 199.8,403.1 202.1,398.0 206.0,404.3 210.2,412.4 213.7,415.2 215.3,430.9 218.3,456.3 221.7,490.0 225.1,524.8 229.5,535.4 233.1,545.1 241.9,545.1 244.6,537.1 247.2,528.3 250.4,516.3 255.0,495.5 259.8,468.0 262.9,444.8 265.2,417.0 268.0,414.7 270.8,417.0 273.1,426.3 276.1,456.3 279.4,472.4 282.8,488.6 286.4,514.0 289.7,527.9 293.7,530.2 296.7,537.1 300.1,538.3 309.4,538.3 314.0,541.8 317.5,546.4 320.9,546.8 324.4,549.2 333.7,549.2 338.3,545.2 341.8,527.9 345.2,516.3 349.9,511.2 356.8,511.2 360.3,518.6 364.9,527.9 368.4,537.1 370.7,542.9 373.0,547.5 375.3,532.5 378.8,504.8 381.5,485.1 385.2,485.1 388.0,500.1 392.6,521.0 397.3,532.5 401.9,539.0 405.4,539.9 410.4,539.9 412.7,539.0 424.3,539.0 428.9,545.9 431.2,541.8 437.0,540.6 440.5,532.5 442.8,514.0 445.1,488.0 447.4,464.0 449.7,444.7 452.7,422.8 455.5,422.1 459.0,426.3 462.4,434.3 465.2,439.0 469.4,435.5 477.5,435.5 479.8,426.3 483.3,412.4 486.7,404.3 489.0,401.3 491.4,406.6 493.7,426.3 496.7,460.9 501.8,461.4 504.1,449.4 508.7,433.2 513.3,418.2 516.8,410.1 520.3,405.9 522.6,410.1 524.9,426.3 527.2,447.1 529.5,470.2 533.0,500.0 536.4,525.6 541.1,539.4 545.7,547.5 549.2,549.9 552.6,548.2 557.1,546.6 559.5,532.5 561.5,507.0 563.1,486.3 564.5,470.1 568.5,460.8 573.1,449.7 576.6,460.8 578.9,474.7 581.2,495.5 584.7,518.6 589.3,534.8 592.8,546.4 612.4,546.8 617.1,551.0 622.8,550.5 629.8,549.2 633.3,545.2 636.7,541.8 641.3,541.3 644.8,535.3 651.8,534.4 657.5,532.5 661.0,537.1 663.3,527.9 665.6,514.0 669.1,491.3"/>
<polyline class="ln" stroke="#00ffff" points="13.3,472.7 18.6,493.0 24.8,518.6 29.2,527.4 33.6,531.3 37.2,530.1 39.8,521.2 42.5,515.9 45.5,515.6 48.6,517.3 53.1,520.0 57.5,520.0 61.0,515.9 65.4,500.0 70.7,485.9 75.0,467.9 82.0,447.0 87.8,432.0 93.6,422.8 100.5,414.7 107.4,408.2 113.2,405.9 119.0,406.6 125.9,408.5 131.7,412.4 137.3,419.3 143.1,426.3 150.1,435.5 157.0,444.8 163.9,454.0 170.9,465.6 177.8,476.0 182.4,482.9 185.5,487.0 188.9,485.2 192.8,472.5 198.6,460.9 203.3,444.8 209.0,426.3 213.7,414.7 218.3,408.9 222.9,408.7 227.5,408.9 231.0,413.5 234.5,422.8 237.9,435.5 241.4,445.9 246.0,452.8 249.5,467.0 252.8,481.0 257.5,488.7 262.1,493.8 270.2,493.8 274.5,499.8 279.3,512.9 283.9,524.4 288.6,532.5 295.5,533.0 325.6,533.0 333.7,536.0 337.1,541.8 341.8,545.9 348.7,547.5 357.9,549.9 376.5,549.9 381.1,548.2 411.6,547.8 425.4,547.3 442.8,547.3 449.7,544.1 457.8,540.6 465.9,537.1 471.7,530.2 477.5,520.9 483.3,509.4 489.0,497.8 494.8,486.3 499.5,474.7 502.9,462.0 507.5,441.5 511.0,423.9 514.5,412.4 517.9,405.9 521.4,403.6 524.9,405.0 529.5,410.1 534.1,418.2 538.8,428.6 543.4,442.0 548.0,457.4 552.6,468.4 557.3,480.0 561.9,494.4 566.5,507.1 569.8,514.0 575.4,522.1 582.4,530.2 589.3,536.0 596.3,541.8 603.2,545.2 612.4,546.4 628.6,546.4 637.9,547.5 649.4,549.9 658.7,551.0 664.5,551.0 669.1,549.9"/>
<polyline class="ln" stroke="#ffff00" points="13.1,410.5 19.6,415.2 26.5,419.8 32.3,423.9 38.0,425.8 43.8,427.9 49.6,433.7 55.4,441.3 60.0,444.8 68.1,445.2 77.4,445.0 84.3,444.8 92.4,442.4 99.4,438.3 106.3,435.5 112.1,433.9 117.9,435.0 123.6,435.0 130.6,434.6 136.3,432.7 142.6,429.2 149.0,425.7 155.4,423.0 161.7,420.7 168.2,418.7 173.2,417.7 182.4,415.8 191.7,413.5 199.8,411.7 207.9,410.3 214.8,410.1 221.8,411.2 228.7,412.8 234.5,419.3 240.3,423.5 246.0,426.3 251.8,432.0 257.6,437.8 263.4,442.0 271.5,445.4 277.5,454.3 283.3,463.0 289.8,472.8 295.5,479.3 301.3,485.1 307.1,487.9 314.0,489.3 320.9,493.2 326.7,499.0 332.5,504.8 338.3,512.9 344.1,519.8 349.9,526.7 355.6,532.5 361.4,536.7 367.2,539.5 373.0,542.2 378.8,545.2 384.5,547.1 390.3,548.0 400.0,548.2 423.1,548.7 441.6,550.5 457.8,550.5 469.4,549.4 480.9,547.5 492.5,544.5 499.5,541.8 506.4,538.3 513.3,534.8 520.3,530.2 527.2,526.7 534.1,523.3 541.1,519.8 548.0,517.9 553.8,515.2 558.4,513.5 563.1,509.4 567.3,505.9 573.1,502.4 577.8,501.7 587.0,500.8 617.1,500.8 621.7,502.0 626.3,507.1 633.3,515.2 640.2,524.4 647.1,532.5 651.8,535.3 658.7,538.3 664.5,541.8 669.1,545.2"/>
<g shape-rendering="crispEdges" class="w">
<rect x="12" y="35" width="667" height="1"/><rect x="12" y="35" width="1" height="344"/><rect x="678" y="35" width="1" height="344"/><rect x="12" y="378" width="667" height="1"/>
<rect x="12" y="380" width="667" height="1"/><rect x="12" y="380" width="1" height="174"/><rect x="678" y="380" width="1" height="174"/><rect x="12" y="553" width="667" height="1"/>
<rect x="679" y="68" width="2" height="1"/><rect x="679" y="102" width="2" height="1"/><rect x="679" y="136" width="2" height="1"/><rect x="679" y="170" width="2" height="1"/><rect x="679" y="204" width="2" height="1"/><rect x="679" y="238" width="2" height="1"/><rect x="679" y="272" width="2" height="1"/><rect x="679" y="306" width="2" height="1"/><rect x="679" y="341" width="2" height="1"/><rect x="679" y="375" width="2" height="1"/><rect x="679" y="397" width="2" height="1"/><rect x="679" y="413" width="2" height="1"/><rect x="679" y="436" width="2" height="1"/><rect x="679" y="475" width="2" height="1"/><rect x="679" y="514" width="2" height="1"/><rect x="679" y="537" width="2" height="1"/><rect x="679" y="382" width="2" height="1"/><rect x="679" y="552" width="2" height="1"/>
<rect x="13" y="554" width="1" height="3"/><rect x="77" y="554" width="1" height="3"/><rect x="141" y="554" width="1" height="3"/><rect x="205" y="554" width="1" height="3"/><rect x="269" y="554" width="1" height="3"/><rect x="333" y="554" width="1" height="3"/><rect x="397" y="554" width="1" height="3"/><rect x="461" y="554" width="1" height="3"/><rect x="525" y="554" width="1" height="3"/><rect x="589" y="554" width="1" height="3"/><rect x="653" y="554" width="1" height="3"/>
</g>
<text class="ax" x="684.2" y="71.9" textLength="32.5" lengthAdjust="spacingAndGlyphs">0.64685</text>
<text class="ax" x="684.2" y="105.9" textLength="32.5" lengthAdjust="spacingAndGlyphs">0.64625</text>
<text class="ax" x="684.2" y="139.9" textLength="32.5" lengthAdjust="spacingAndGlyphs">0.64565</text>
<text class="ax" x="684.2" y="173.9" textLength="32.5" lengthAdjust="spacingAndGlyphs">0.64505</text>
<text class="ax" x="684.2" y="207.9" textLength="32.5" lengthAdjust="spacingAndGlyphs">0.64445</text>
<text class="ax" x="684.2" y="241.9" textLength="32.5" lengthAdjust="spacingAndGlyphs">0.64385</text>
<text class="ax" x="684.2" y="275.9" textLength="32.5" lengthAdjust="spacingAndGlyphs">0.64325</text>
<text class="ax" x="684.2" y="309.9" textLength="32.5" lengthAdjust="spacingAndGlyphs">0.64265</text>
<text class="ax" x="684.2" y="344.9" textLength="32.5" lengthAdjust="spacingAndGlyphs">0.64205</text>
<text class="ax" x="684.2" y="378.9" textLength="32.5" lengthAdjust="spacingAndGlyphs">0.64145</text>
<rect x="680" y="312" width="41" height="11" fill="#ffffff" shape-rendering="crispEdges"/>
<text class="ax" x="684.2" y="320.8" textLength="32.5" lengthAdjust="spacingAndGlyphs" style="fill:#000;stroke:#000">0.64247</text>
<text class="ax" x="683" y="391.2" textLength="15.0" lengthAdjust="spacingAndGlyphs">120</text>
<text class="ax" x="683" y="402.0" textLength="15.0" lengthAdjust="spacingAndGlyphs">100</text>
<text class="ax" x="683" y="416.7" textLength="10.0" lengthAdjust="spacingAndGlyphs">80</text>
<text class="ax" x="683" y="439.7" textLength="10.0" lengthAdjust="spacingAndGlyphs">50</text>
<text class="ax" x="683" y="478.7" textLength="17.5" lengthAdjust="spacingAndGlyphs">0.00</text>
<text class="ax" x="682" y="517.7" textLength="13.0" lengthAdjust="spacingAndGlyphs">-50</text>
<text class="ax" x="682" y="540.7" textLength="13.0" lengthAdjust="spacingAndGlyphs">-80</text>
<text class="ax" x="682" y="549.9" textLength="18.0" lengthAdjust="spacingAndGlyphs">-100</text>
<text class="ax" x="12.1" y="565.7" textLength="47.4" lengthAdjust="spacingAndGlyphs">9 Dec 2024</text>
<text class="ax" x="76.1" y="565.7" textLength="50.0" lengthAdjust="spacingAndGlyphs">9 Dec 15:15</text>
<text class="ax" x="140.1" y="565.7" textLength="50.0" lengthAdjust="spacingAndGlyphs">9 Dec 16:35</text>
<text class="ax" x="204.1" y="565.7" textLength="50.0" lengthAdjust="spacingAndGlyphs">9 Dec 17:55</text>
<text class="ax" x="268.1" y="565.7" textLength="50.0" lengthAdjust="spacingAndGlyphs">9 Dec 19:15</text>
<text class="ax" x="332.1" y="565.7" textLength="50.0" lengthAdjust="spacingAndGlyphs">9 Dec 20:35</text>
<text class="ax" x="396.1" y="565.7" textLength="50.0" lengthAdjust="spacingAndGlyphs">9 Dec 21:55</text>
<text class="ax" x="460.1" y="565.7" textLength="50.0" lengthAdjust="spacingAndGlyphs">9 Dec 23:15</text>
<text class="ax" x="524.1" y="565.7" textLength="55.1" lengthAdjust="spacingAndGlyphs">10 Dec 00:55</text>
<text class="ax" x="588.1" y="565.7" textLength="55.1" lengthAdjust="spacingAndGlyphs">10 Dec 02:15</text>
<text class="ax" x="652.1" y="565.7" textLength="55.1" lengthAdjust="spacingAndGlyphs">10 Dec 03:35</text>
<path d="M16 42H23.4L19.7 46.2Z" fill="#ffffff"/>
<text class="ax" x="28.7" y="47.1" textLength="56" lengthAdjust="spacingAndGlyphs">AUDUSD,M5</text>
<text class="ax" x="91" y="47.1" textLength="32.5" lengthAdjust="spacingAndGlyphs">0.64246</text>
<text class="ax" x="127.5" y="47.1" textLength="32.5" lengthAdjust="spacingAndGlyphs">0.64253</text>
<text class="ax" x="163.6" y="47.1" textLength="32.5" lengthAdjust="spacingAndGlyphs">0.64241</text>
<text class="ax" x="199.7" y="47.1" textLength="32.5" lengthAdjust="spacingAndGlyphs">0.64247</text>
<text class="ax" x="17.2" y="392.8" textLength="42.5" lengthAdjust="spacingAndGlyphs">R(9,26,52)</text>
<text class="ax" x="62.9" y="392.8" textLength="20.5" lengthAdjust="spacingAndGlyphs">-20.4</text>
<text class="ax" x="86.8" y="392.8" textLength="20.5" lengthAdjust="spacingAndGlyphs">-95.5</text>
<text class="ax" x="111.2" y="392.8" textLength="20.5" lengthAdjust="spacingAndGlyphs">-90.2</text>
<g shape-rendering="crispEdges">
<rect x="11.5" y="12.5" width="11" height="8" fill="#ffffff" stroke="#9dbdf9"/><rect x="11.5" y="12.5" width="11" height="8" fill="none" stroke="#3f7bf6" stroke-dasharray="1 1"/><rect x="14.5" y="17.5" width="10" height="8" fill="#ffffff" stroke="#9dbdf9"/><rect x="14.5" y="17.5" width="10" height="8" fill="none" stroke="#3f7bf6" stroke-dasharray="1 1"/>
</g>
<path d="M13.5 15.8L14.7 14.6L15.9 15.8M17 14.6L18.2 15.8L19.4 14.6L20.4 15.6" stroke="#4f86f7" fill="none" stroke-width="1"/>
<path d="M16.3 20.2L17.6 20.2L18.6 23.2L20 20.2L21.4 23.2L22.6 21.6" stroke="#4f86f7" fill="none" stroke-width="1"/>
<text x="30" y="24" font-size="12.4" style="text-rendering:geometricPrecision" fill="#000" textLength="66.5" lengthAdjust="spacingAndGlyphs">AUDUSD,M5</text>
<rect x="624.5" y="10.5" width="31" height="17" rx="2" ry="2" fill="url(#bt)" stroke="#5f7590"/><rect x="625.5" y="11.5" width="29" height="15" rx="1.5" ry="1.5" fill="none" stroke="#ffffff" stroke-opacity="0.7"/>
<rect x="658.5" y="10.5" width="31" height="17" rx="2" ry="2" fill="url(#bt)" stroke="#5f7590"/><rect x="659.5" y="11.5" width="29" height="15" rx="1.5" ry="1.5" fill="none" stroke="#ffffff" stroke-opacity="0.7"/>
<rect x="692.5" y="10.5" width="31" height="17" rx="2" ry="2" fill="url(#cl)" stroke="#4d1a1a"/><rect x="693.5" y="11.5" width="29" height="15" rx="1.5" ry="1.5" fill="none" stroke="#f4c8bc" stroke-opacity="0.7"/>
<rect x="634.5" y="18.5" width="10" height="4" fill="#ffffff" stroke="#5a6470" shape-rendering="crispEdges"/>
<rect x="668.5" y="14.5" width="10" height="8" fill="#ffffff" stroke="#5a6470" shape-rendering="crispEdges"/><rect x="671.5" y="17.5" width="4" height="2" fill="#7f9fcb" stroke="#4a5560" shape-rendering="crispEdges"/>
<path d="M703 15H705.6L707.5 17.2L709.4 15H712L709.3 18.5L712 22H709.4L707.5 19.8L705.6 22H703L705.7 18.5Z" fill="#3d4660" stroke="#3d4660" stroke-width="2" stroke-linejoin="round"/><path d="M703 15H705.6L707.5 17.2L709.4 15H712L709.3 18.5L712 22H709.4L707.5 19.8L705.6 22H703L705.7 18.5Z" fill="#ffffff" stroke="#ffffff" stroke-width="0.4" stroke-linejoin="round"/>
<polyline points="72.2,98.8 122.6,41.8 156.5,89.3 210.4,11.6 245.4,77.7 274.5,39.6 306.3,108.8" fill="none" stroke="#ffffff" stroke-width="5.4" stroke-linejoin="round" stroke-linecap="round" shape-rendering="crispEdges"/>
<path d="M266.8 56.1H272.4V69.3L279.3 63V69.7L269.6 79.5L259.8 69.7V63L266.8 69.3Z" fill="#fff700" stroke="#f0c000" stroke-width="0.5"/>
<polygon points="264.6,76.8 266.2,81.6 271.4,81.7 267.3,84.8 268.8,89.6 264.6,86.7 260.4,89.6 261.9,84.8 257.8,81.7 263.0,81.6" fill="#fff700" stroke="#e8b000" stroke-width="0.5"/>
</svg>
</body></html>
